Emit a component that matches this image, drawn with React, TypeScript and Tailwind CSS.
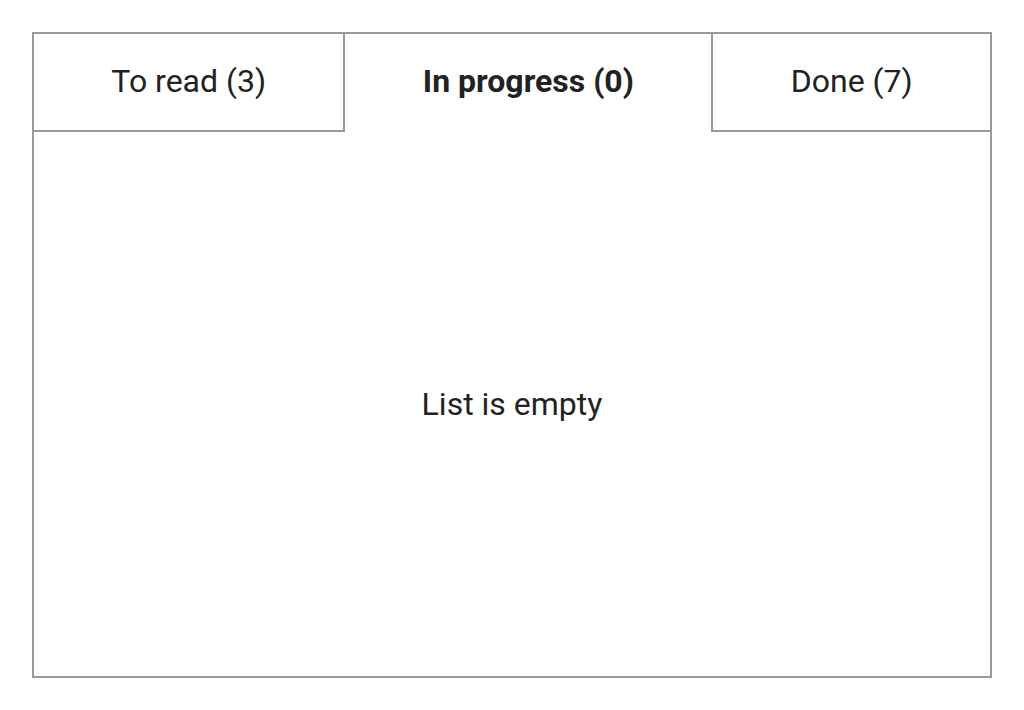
import React from 'react';

const tabs = [
  { label: 'To read (3)', active: false },
  { label: 'In progress (0)', active: true },
  { label: 'Done (7)', active: false },
];

export default function App() {
  return (
    <div className="w-[1024px] h-[710px] bg-white p-8 text-[#222]" style={{ fontFamily: 'Roboto, "Liberation Sans", sans-serif' }}>
      <div className="w-[960px] h-[646px] border-2 border-[#999] flex flex-col">
        <div className="flex h-[98px]">
          {tabs.map((tab, i) => (
            <div
              key={tab.label}
              className={`flex-auto flex items-center justify-center text-[32px] leading-none pb-[2px] border-b-2 ${
                tab.active
                  ? 'font-bold border-transparent'
                  : i === 0
                  ? 'border-r-2 border-[#999]'
                  : 'border-l-2 border-[#999]'
              }`}
            >
              {tab.label}
            </div>
          ))}
        </div>
        <div className="flex-1 flex items-center justify-center text-[32px] leading-none">List is empty</div>
      </div>
    </div>
  );
}
